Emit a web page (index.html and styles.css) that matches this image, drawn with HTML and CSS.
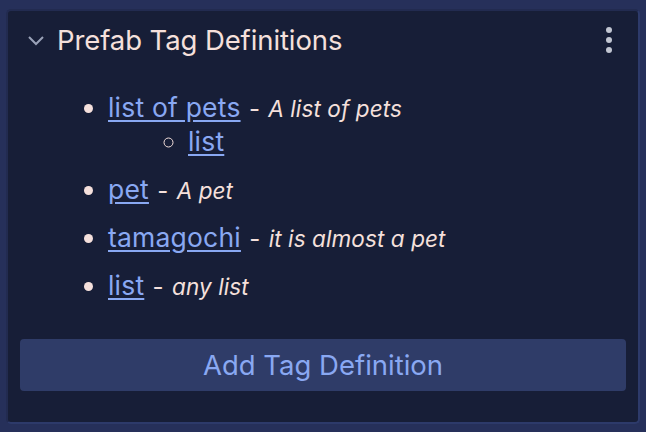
FILE: index.html
```html
<!DOCTYPE html>
<html>
<head>
<meta charset="utf-8">
<link rel="stylesheet" href="styles.css">
</head>
<body>
<section class="panel">
  <header class="panel-head">
    <svg class="chevron" width="18" height="12" viewBox="0 0 18 12"><path d="M2 2 L9 9 L16 2" fill="none" stroke="#9aa2b8" stroke-width="2"/></svg>
    <h2 class="title">Prefab Tag Definitions</h2>
    <div class="kebab"><span></span><span></span><span></span></div>
  </header>
  <ul class="tags">
    <li><a href="#">list of pets</a> <span class="sep">-</span> <em>A list of pets</em>
      <ul class="sub"><li><a href="#">list</a></li></ul>
    </li>
    <li><a href="#">pet</a> <span class="sep">-</span> <em>A pet</em></li>
    <li><a href="#">tamagochi</a> <span class="sep">-</span> <em>it is almost a pet</em></li>
    <li><a href="#">list</a> <span class="sep">-</span> <em>any list</em></li>
  </ul>
  <button class="add">Add Tag Definition</button>
</section>
</body>
</html>
```
FILE: styles.css
```css
html, body { margin: 0; padding: 0; }
body {
  width: 646px; height: 432px;
  background: #26305a;
  font-family: "Inter", "DejaVu Sans", sans-serif;
  color: #f5e0dc;
  padding: 9px 6px 0 6px;
  box-sizing: border-box;
}
.panel {
  height: 415px;
  background: #171e37;
  border: 2px solid #2d3a6a;
  border-top-color: #222b50;
  border-left-color: #222b50;
  border-radius: 5px;
  box-sizing: border-box;
  display: flex;
  flex-direction: column;
  padding: 0 12px;
}
.panel-head {
  display: flex;
  align-items: center;
  height: 58px;
  padding-left: 7px;
}
.chevron { margin-right: 12px; margin-top: 2px; }
.title {
  margin: 0;
  font-weight: 400;
  font-size: 27.5px;
  letter-spacing: -0.1px;
  color: #f5e0dc;
  flex: 1;
}
.kebab {
  display: flex; flex-direction: column; gap: 4px;
  margin-right: 14px;
}
.kebab span { width: 6px; height: 6px; border-radius: 50%; background: #c2c6d2; }
.tags {
  margin: 22px 0 0 0;
  padding-left: 88px;
  font-size: 26px;
  list-style: disc;
}
.tags > li { margin-bottom: 14px; }
.tags li { line-height: 34px; }
.tags li::marker { color: #f5e0dc; font-size: 27px; }
.tags a, .sep, .tags em { line-height: 1; }
.tags a { color: #89a8f2; text-decoration: underline; text-underline-offset: 3px; font-size: 26.5px; letter-spacing: 0.2px; }
.sep { font-size: 24px; color: #f5e0dc; margin: 0 1px; }
.tags em { font-size: 22.5px; color: #f5e0dc; letter-spacing: 0.1px; }
.sub { list-style: circle; margin: 0 0 1px 0; padding-left: 80px; }
.add {
  margin-top: auto;
  margin-bottom: 31px;
  height: 52px;
  border: 0;
  border-radius: 4px;
  background: #2f3c68;
  color: #89a8f2;
  font-family: inherit;
  font-size: 27.5px;
  width: 100%;
}
```
